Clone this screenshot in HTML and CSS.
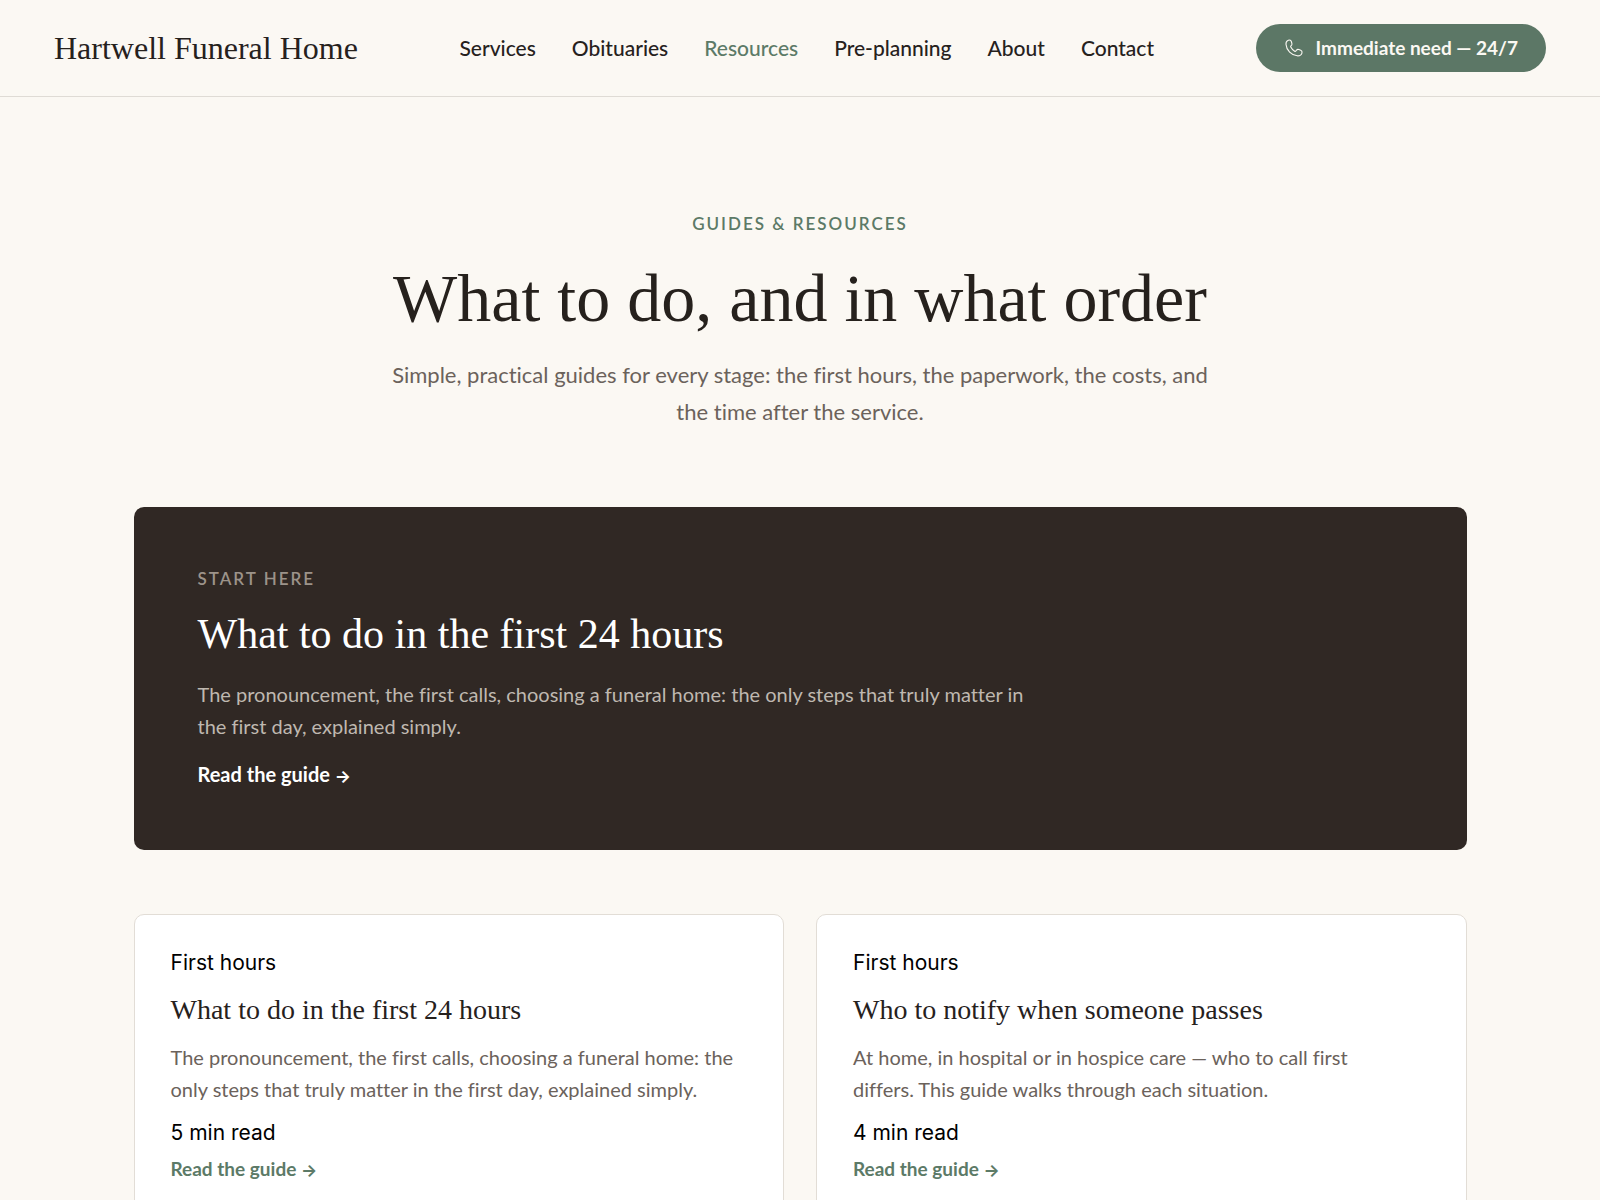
FILE: index.html
```html
<!DOCTYPE html>
<html lang="en">
<head>
    <meta charset="UTF-8">
    <meta name="viewport" content="width=device-width, initial-scale=1.0">
    <title>Guides &amp; Resources | Hartwell Funeral Home</title>
    <link rel="stylesheet" href="styles.css">
</head>
<body>
    <header class="site-header">
        <a class="logo" href="#">Hartwell Funeral Home</a>
        <nav class="nav">
            <a href="#">Services</a>
            <a href="#">Obituaries</a>
            <a href="#" class="active">Resources</a>
            <a href="#">Pre-planning</a>
            <a href="#">About</a>
            <a href="#">Contact</a>
        </nav>
        <a class="cta" href="#">
            <svg class="cta-icon" viewBox="0 0 24 24" aria-hidden="true">
                <path d="M5.200 2.600C3.200 3.300 2.200 5.200 2.400 7.600c.6 7.400 6.500 13.200 13.400 13.800 2.900.2 5.200-1.200 5.800-3.600.3-1.300-.3-2.500-1.500-3l-2.300-.9c-1.100-.4-2.200-.1-2.900.8l-.6.8c-.4.5-1 .6-1.500.3-2.100-1.200-3.700-2.900-4.700-4.900-.3-.6-.1-1.200.4-1.500.9-.6 1.200-1.500 1-2.600l-.6-2.300c-.4-1.600-2-2.500-3.700-1.900z"/>
            </svg>
            Immediate need — 24/7
        </a>
    </header>

    <main class="container">
        <section class="hero">
            <p class="eyebrow">Guides &amp; Resources</p>
            <h1>What to do, and in what order</h1>
            <p class="lead">Simple, practical guides for every stage: the first hours, the paperwork, the costs, and the time after the service.</p>
        </section>

        <section class="featured">
            <p class="eyebrow">Start here</p>
            <h2>What to do in the first 24 hours</h2>
            <p class="text">The pronouncement, the first calls, choosing a funeral home: the only steps that truly matter in the first day, explained simply.</p>
            <a class="featured-link" href="#">Read the guide <span class="arrow">→</span></a>
        </section>

        <section class="cards">
            <article class="card">
                <span class="meta">First hours</span>
                <h3>What to do in the first 24 hours</h3>
                <p class="text">The pronouncement, the first calls, choosing a funeral home: the only steps that truly matter in the first day, explained simply.</p>
                <span class="meta">5 min read</span>
                <a class="card-link" href="#">Read the guide <span class="arrow">→</span></a>
            </article>
            <article class="card">
                <span class="meta">First hours</span>
                <h3>Who to notify when someone passes</h3>
                <p class="text">At home, in hospital or in hospice care — who to call first differs.&nbsp;This guide walks through each situation.</p>
                <span class="meta">4 min read</span>
                <a class="card-link" href="#">Read the guide <span class="arrow">→</span></a>
            </article>
        </section>
    </main>
</body>
</html>
```
FILE: styles.css
```css
* {
    box-sizing: border-box;
}
body {
    margin: 0;
    background-color: #fbf8f3;
    color: #26211d;
    font-family: Lato, "Open Sans", sans-serif;
    font-size: 20px;
    font-variant-ligatures: no-common-ligatures;
    line-height: 32px;
}
h1, h2, h3, p {
    margin: 0;
}
h1, h2, h3, .logo {
    font-family: "Liberation Serif", serif;
    font-weight: 400;
    font-variant-ligatures: normal;
}
a {
    color: inherit;
    text-decoration: none;
}

/* Header */
.site-header {
    display: flex;
    justify-content: space-between;
    align-items: center;
    padding: 24px 54px;
    border-bottom: 1px solid #dfdbd5;
}
.logo {
    font-size: 32px;
}
.nav {
    display: flex;
    gap: 36px;
    font-size: 21px;
    font-weight: 500;
}
.nav .active {
    color: #5c7a67;
}
.cta {
    display: flex;
    align-items: center;
    gap: 12px;
    padding: 8px 28px;
    border-radius: 999px;
    background-color: #5c7766;
    color: #fbf8f3;
    font-size: 19px;
    font-weight: 700;
}
.cta-icon {
    width: 20px;
    height: 20px;
    fill: none;
    stroke: currentColor;
    stroke-width: 1.3;
}

/* Hero */
.container {
    width: 100%;
    max-width: 1333px;
    margin: 0 auto;
}
.hero {
    padding: 115px 0 77px;
    text-align: center;
}
.eyebrow {
    color: #5c7a67;
    font-size: 17px;
    font-weight: 600;
    letter-spacing: 2px;
    line-height: 24px;
    text-transform: uppercase;
}
h1 {
    margin: 22px 0 18px;
    font-size: 68px;
    line-height: 80px;
}
.lead {
    max-width: 840px;
    margin: 0 auto;
    color: #6b625b;
    font-size: 22px;
    line-height: 37px;
}

/* Featured guide */
.featured {
    padding: 60px 64px 58px;
    border-radius: 10px;
    background-color: #302824;
    color: #fff;
}
.featured .eyebrow {
    color: #9c938a;
}
h2 {
    margin: 17px 0 18px;
    font-size: 42px;
    line-height: 52px;
}
.featured .text {
    max-width: 848px;
    color: #bfb8b0;
}
.featured-link {
    display: inline-block;
    margin-top: 16px;
    font-weight: 700;
}
.arrow {
    font-family: Inter, sans-serif;
    font-size: 17px;
}

/* Guide cards */
.cards {
    display: grid;
    grid-template-columns: 1fr 1fr;
    gap: 32px;
    padding: 64px 0;
}
.card {
    display: flex;
    flex-direction: column;
    align-items: flex-start;
    padding: 36px;
    border: 1px solid #e2ddd6;
    border-radius: 10px;
    background-color: #fff;
}
.meta {
    color: #000;
    font-family: Inter, sans-serif;
    font-size: 21px;
    line-height: 24px;
}
h3 {
    margin: 17px 0 13px;
    font-size: 28px;
    line-height: 36px;
}
.card .text {
    margin-bottom: 16px;
    color: #6b625b;
}
.card-link {
    margin-top: 8px;
    color: #5c7a67;
    font-size: 19px;
    font-weight: 700;
}
```
